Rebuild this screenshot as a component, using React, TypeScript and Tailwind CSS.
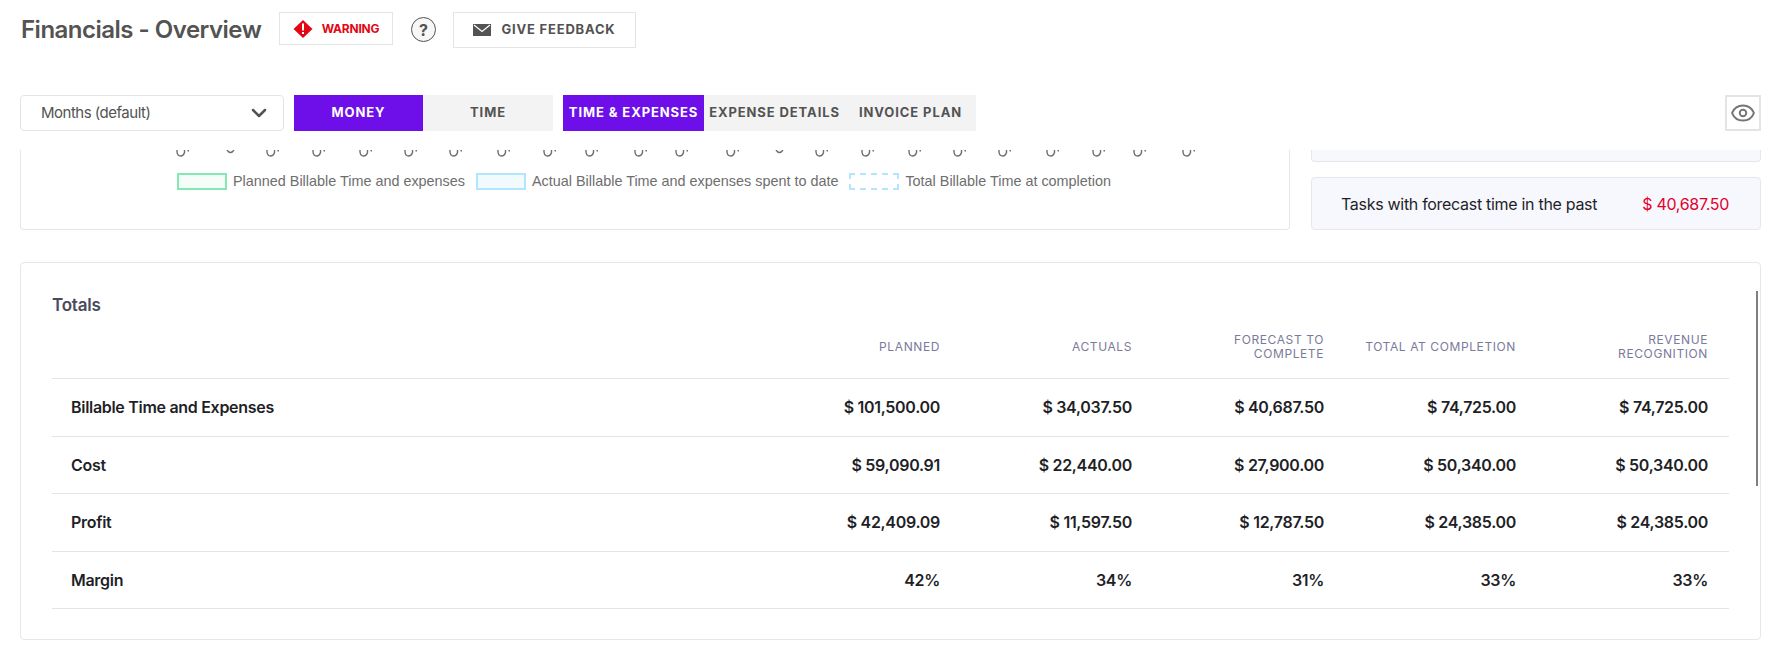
import {ChevronDown, Eye} from 'lucide-react'

const columns = [['PLANNED'], ['ACTUALS'], ['FORECAST TO', 'COMPLETE'], ['TOTAL AT COMPLETION'], ['REVENUE', 'RECOGNITION']]

const rows = [
  {label: 'Billable Time and Expenses', values: ['$ 101,500.00', '$ 34,037.50', '$ 40,687.50', '$ 74,725.00', '$ 74,725.00']},
  {label: 'Cost', values: ['$ 59,090.91', '$ 22,440.00', '$ 27,900.00', '$ 50,340.00', '$ 50,340.00']},
  {label: 'Profit', values: ['$ 42,409.09', '$ 11,597.50', '$ 12,787.50', '$ 24,385.00', '$ 24,385.00']},
  {label: 'Margin', values: ['42%', '34%', '31%', '33%', '33%']},
]

// left edge of each clipped axis label, measured from the chart card
const ticks = [155, 205, 245, 291, 338, 383, 428, 476, 522, 564, 613, 654, 705, 754, 794, 840, 887, 932, 977, 1025, 1071, 1112, 1161]
const shallowTicks = [205, 754]

function WarningIcon() {
  return (
    <svg width="20" height="20" viewBox="0 0 20 20">
      <path d="M10 1 L19.5 10 L10 19 L0.5 10 Z" fill="#e30613" />
      <rect x="9" y="4.5" width="2" height="7" fill="#fff" />
      <rect x="9" y="13" width="2" height="2" fill="#fff" />
    </svg>
  )
}

function MailIcon() {
  return (
    <svg width="18" height="12" viewBox="0 0 18 12">
      <path d="M0 0 H18 V12 H0 Z" fill="#535353" />
      <path d="M1 1 L9 7.5 L17 1" fill="none" stroke="#fff" strokeWidth="1.2" />
    </svg>
  )
}

function Tab({label, active, className}: {label: string; active?: boolean; className?: string}) {
  return (
    <div
      className={`flex h-9 items-center justify-center text-[13px] font-bold tracking-[0.9px] whitespace-nowrap ${
        active ? 'bg-[#6e0fea] text-white' : 'bg-[#f3f3f3] text-[#535353]'
      } ${className}`}
    >
      {label}
    </div>
  )
}

function LegendBox({className}: {className: string}) {
  return <span className={`h-[17px] w-[50px] border-2 ${className}`} />
}

export default function App() {
  return (
    <div className="h-[656px] w-[1783px] overflow-hidden bg-white font-['Inter','Liberation_Sans',sans-serif]">
      {/* title row */}
      <div className="flex h-[95px] items-start pt-3 pl-[21px]">
        <h1 className="mt-[1px] w-[241px] text-[24px] leading-[33px] font-semibold tracking-[-0.5px] whitespace-nowrap text-[#535353]">
          Financials - Overview
        </h1>
        <div className="ml-[17px] flex h-[33px] w-[114px] items-center justify-center gap-[9px] border border-[#e4e4e4] text-[12px] font-bold tracking-[-0.2px] text-[#e30613]">
          <WarningIcon />
          WARNING
        </div>
        <div className="mt-[5px] ml-[18px] flex h-[25px] w-[25px] items-center justify-center rounded-full border-[1.5px] border-[#535353] bg-[#f7f7f7] text-[16px] font-bold text-[#535353]">
          ?
        </div>
        <div className="ml-[17px] flex h-9 w-[183px] items-center justify-center gap-[10px] border border-[#e4e4e4] text-[13px] font-bold tracking-[0.8px] text-[#535353]">
          <MailIcon />
          GIVE FEEDBACK
        </div>
      </div>

      {/* filter row */}
      <div className="flex items-start pr-[22px] pl-5">
        <div className="flex h-9 w-[264px] items-center justify-between rounded border border-[#e4e4e4] pr-[12px] pl-[20px] text-[15px] tracking-[-0.5px] text-[#535353]">
          Months (default)
          <ChevronDown size={24} strokeWidth={2.5} />
        </div>
        <div className="ml-[10px] flex">
          <Tab label="MONEY" active className="w-[129px]" />
          <Tab label="TIME" className="w-[130px]" />
        </div>
        <div className="ml-[10px] flex">
          <Tab label="TIME & EXPENSES" active className="w-[141px]" />
          <Tab label="EXPENSE DETAILS" className="w-[141px]" />
          <Tab label="INVOICE PLAN" className="w-[131px]" />
        </div>
        <div className="ml-auto flex h-9 w-9 items-center justify-center border-2 border-[#e4e4e4] text-[#757575]">
          <Eye size={26} strokeWidth={1.8} />
        </div>
      </div>

      <div className="mt-[19px] pr-[22px] pl-5">
        <div className="flex h-[80px] gap-[21px]">
          <div className="w-[1270px] rounded-b border-x border-b border-[#e6e6ed]">
            <svg width="1268" height="7" className="block">
              {ticks.map((x) => (
                <g key={x} transform={`translate(${x} 0)`} fill="none" stroke="#6e6e6e" strokeWidth="1.4">
                  {shallowTicks.includes(x) ? (
                    <path d="M1 0 Q4.5 5 8 0" />
                  ) : (
                    <>
                      <path d="M1 0 V2 Q1.5 6 4.5 6 Q7.5 6 8.5 2.5 V0" />
                      <rect x="11.5" y="0" width="1.5" height="1.5" fill="#6e6e6e" stroke="none" />
                    </>
                  )}
                </g>
              ))}
            </svg>
            <div className="mt-[16px] ml-[156px] flex items-center font-['Liberation_Sans',sans-serif] text-[14.4px] leading-[17px] text-[#6e6e6e]">
              <LegendBox className="border-[#83e8b4] bg-[#f5fdf9]" />
              <span className="ml-[6px]">Planned Billable Time and expenses</span>
              <LegendBox className="ml-[11px] border-[#b3e5ff] bg-[#f0faff]" />
              <span className="ml-[6px]">Actual Billable Time and expenses spent to date</span>
              <LegendBox className="ml-[11px] border-dashed border-[#b3e5ff]" />
              <span className="ml-[6px]">Total Billable Time at completion</span>
            </div>
          </div>
          <div className="flex w-[450px] flex-col gap-[15px]">
            <div className="h-3 rounded-b border-x border-b border-[#e6e6ed] bg-[#f7f8fd]" />
            <div className="flex h-[53px] items-center justify-between rounded border border-[#e6e6ed] bg-[#f7f8fd] pr-[31px] pl-[29px] text-[16px] tracking-[-0.3px]">
              <span className="text-[#1f1f28]">Tasks with forecast time in the past</span>
              <span className="text-[#e4002b]">$ 40,687.50</span>
            </div>
          </div>
        </div>

        {/* totals */}
        <div className="relative mt-[32px] h-[378px] rounded border border-[#e6e6ed] px-[31px]">
          <div className="pt-[32px] text-[17px] leading-[20px] font-semibold tracking-[-0.2px] text-[#4a4a5c]">Totals</div>
          <div className="mt-[14px] grid h-[50px] grid-cols-[714px_repeat(5,192px)] items-center border-b border-[#e4e4e4] pb-[13px]">
            <div />
            {columns.map((lines) => (
              <div key={lines[0]} className="pr-[18px] text-right text-[12px] leading-[14px] tracking-[0.6px] text-[#7a7a9a]">
                {lines.map((line) => (
                  <div key={line}>{line}</div>
                ))}
              </div>
            ))}
          </div>
          {rows.map((r) => (
            <div
              key={r.label}
              className="grid h-[57.5px] grid-cols-[714px_repeat(5,192px)] items-center border-b border-[#e4e4e4] text-[16px] font-semibold tracking-[-0.3px] text-[#1f1f28]"
            >
              <div className="pl-[19px]">{r.label}</div>
              {r.values.map((v, i) => (
                <div key={i} className="pr-[18px] text-right">
                  {v}
                </div>
              ))}
            </div>
          ))}
          <div className="absolute top-7 right-[2px] h-[195px] w-[2px] bg-[#808080]" />
        </div>
      </div>
    </div>
  )
}
